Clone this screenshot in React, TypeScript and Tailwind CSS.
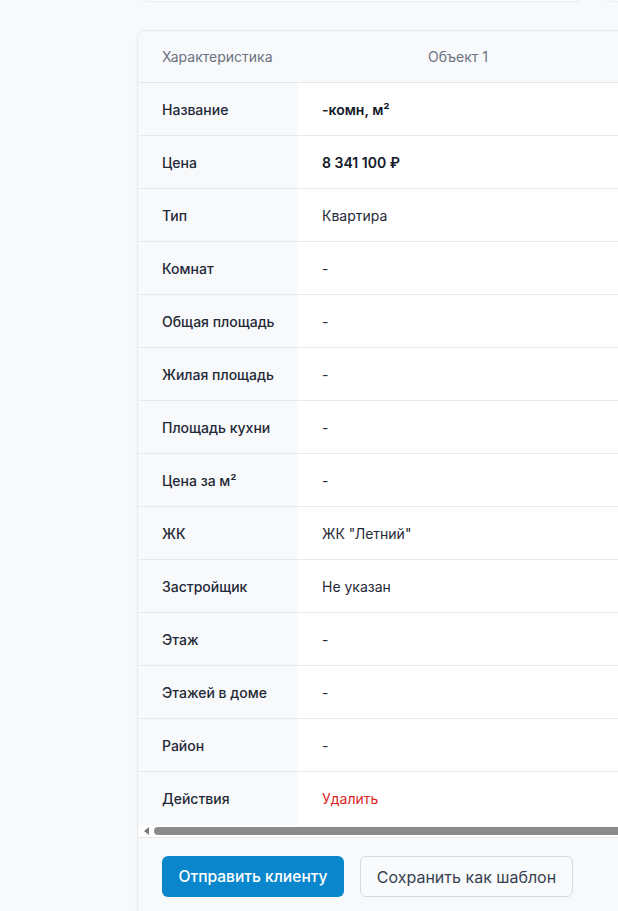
import React from "react";

const rows: { label: string; value: string; bold?: boolean; red?: boolean }[] = [
  { label: "Название", value: "-комн, м²", bold: true },
  { label: "Цена", value: "8 341 100 ₽", bold: true },
  { label: "Тип", value: "Квартира" },
  { label: "Комнат", value: "-" },
  { label: "Общая площадь", value: "-" },
  { label: "Жилая площадь", value: "-" },
  { label: "Площадь кухни", value: "-" },
  { label: "Цена за м²", value: "-" },
  { label: "ЖК", value: 'ЖК "Летний"' },
  { label: "Застройщик", value: "Не указан" },
  { label: "Этаж", value: "-" },
  { label: "Этажей в доме", value: "-" },
  { label: "Район", value: "-" },
  { label: "Действия", value: "Удалить", red: true },
];

export default function App() {
  return (
    <div
      className="w-[618px] h-[911px] overflow-hidden bg-[#f8f9fb] relative"
      style={{ fontFamily: "Inter, 'Noto Sans', sans-serif" }}
    >
      {/* shadows of elements above */}
      <div className="flex gap-6 ml-[142px] -mt-10 h-[41px]">
        <div className="w-[440px] shrink-0 bg-[#f8f9fb] shadow-[0_1px_2px_rgba(0,0,0,0.06)] rounded-b-md" />
        <div className="w-[200px] shrink-0 bg-[#f8f9fb] shadow-[0_1px_2px_rgba(0,0,0,0.06)] rounded-b-md" />
      </div>

      <div className="ml-[137px] mt-[29px] w-[490px] rounded-lg border border-[#e8eaee] bg-white shadow-[0_1px_3px_rgba(0,0,0,0.04)] overflow-hidden">
        {/* header */}
        <div className="flex h-[52px] bg-[#f8f9fb] border-b border-[#e5e7eb] text-[14px] text-[#6b7280]">
          <div className="w-[160px] pl-6 flex items-center">Характеристика</div>
          <div className="w-[320px] flex items-center justify-center">Объект 1</div>
        </div>
        {rows.map((r, i) => (
          <div
            key={r.label}
            className={`flex h-[53px] text-[14px] text-[#1f2937] ${i < rows.length - 1 ? "border-b border-[#e8e9ec]" : ""}`}
          >
            <div className="w-[160px] shrink-0 pl-6 flex items-center bg-[#f8f9fb] font-medium">{r.label}</div>
            <div
              className={`w-[320px] pl-6 flex items-center ${r.bold ? "font-semibold text-[#111827]" : ""} ${r.red ? "text-[#dc2626]" : ""}`}
            >
              {r.value}
            </div>
          </div>
        ))}
        {/* scrollbar */}
        <div className="h-[13px] flex items-center bg-white border-b border-[#e5e7eb]">
          <div className="w-[16px] flex justify-center">
            <div className="w-0 h-0 border-y-[4px] border-y-transparent border-r-[5px] border-r-[#7a7a7a]" />
          </div>
          <div className="h-[8px] flex-1 rounded-l-full bg-[#8b8b8b]" />
        </div>
        {/* footer */}
        <div className="bg-[#f8f9fb] pl-6 pt-[18px] pb-6 flex gap-4">
          <button className="h-[41px] w-[182px] rounded-md bg-[#0a87cc] text-white text-[15.6px] font-medium">
            Отправить клиенту
          </button>
          <button className="h-[41px] w-[213px] rounded-md border border-[#d6d9de] bg-[#f9fafb] text-[#374151] text-[16px]">
            Сохранить как шаблон
          </button>
        </div>
      </div>
    </div>
  );
}
